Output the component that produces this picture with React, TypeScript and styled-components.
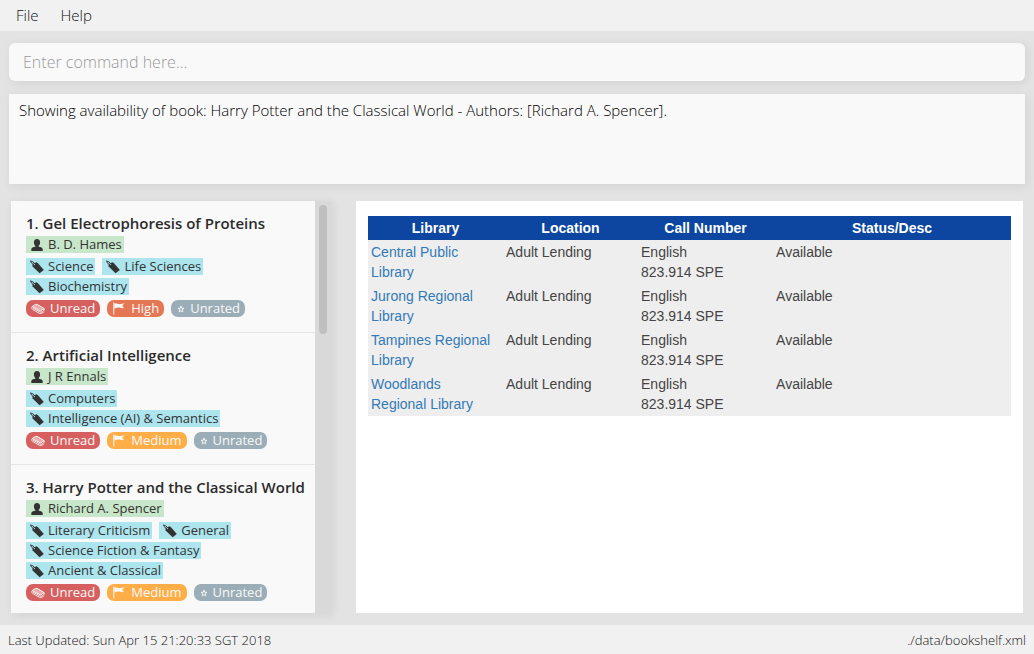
import React from "react";
import styled, { createGlobalStyle } from "styled-components";

const GlobalStyle = createGlobalStyle`
  *, *::before, *::after { box-sizing: border-box; }
  body { margin: 0; background: #e3e3e3; font-family: "Open Sans", sans-serif; color: #333; }
`;

const Window = styled.div`
  display: flex;
  flex-direction: column;
  height: 100vh;
`;

const MenuBar = styled.nav`
  display: flex;
  gap: 6px;
  padding: 4px 8px 5px;
  background: #f1f1f1;
`;

const MenuButton = styled.button`
  border: 0;
  padding: 0 8px;
  background: transparent;
  font: 300 15px/22px "Open Sans", sans-serif;
  color: #111;
`;

const Main = styled.main`
  flex: 1;
  min-height: 0;
  display: flex;
  flex-direction: column;
  padding: 12px 9px;
`;

const CommandBox = styled.input`
  width: 100%;
  height: 38px;
  padding: 0 14px;
  border: 0;
  border-radius: 6px;
  outline: 0;
  background: #f9f9f9;
  box-shadow: 2px 2px 10px rgba(0, 0, 0, 0.08);
  font: 300 16px/24px "Open Sans", sans-serif;
  color: #111;
  &::placeholder { color: #999; opacity: 1; }
`;

const ResultBox = styled.section`
  flex: none;
  min-height: 90px;
  margin-top: 13px;
  padding: 5px 10px;
  background: #f9f9f9;
  box-shadow: 2px 2px 10px rgba(0, 0, 0, 0.08);
  font-weight: 300;
  font-size: 15px;
  line-height: 22px;
  color: #000;
`;

const Panels = styled.div`
  flex: 1;
  min-height: 0;
  display: flex;
  gap: 25px;
  margin-top: 17px;
  padding: 0 2px;
`;

const ListPanel = styled.section`
  flex: 0 0 320px;
  display: flex;
  background: #f9f9f9;
  box-shadow: 2px 2px 10px rgba(0, 0, 0, 0.08);
`;

const BookList = styled.ol`
  flex: 1;
  min-width: 0;
  margin: 0;
  padding: 0;
  overflow: hidden;
  list-style: none;
`;

const ScrollTrack = styled.div`
  width: 16px;
  padding: 4px;
  background: #d9d9d9;
`;

const ScrollThumb = styled.div`
  height: 32%;
  border-radius: 4px;
  background: #bfbfbf;
`;

const Card = styled.li`
  padding: 10px 0 15px 15px;
  border-bottom: 1px solid #e6e6e6;
`;

const Title = styled.h2`
  margin: 0 0 1px;
  font-weight: 600;
  font-size: 15px;
  line-height: 24px;
  white-space: nowrap;
  color: #2b2b2b;
`;

const ChipRow = styled.div`
  display: flex;
  flex-wrap: wrap;
  gap: 3px 7px;
  padding-right: 15px;
  & + & { margin-top: 5px; }
`;

const Chip = styled.span<{ $color: string }>`
  display: flex;
  align-items: center;
  gap: 4px;
  height: 17px;
  padding: 0 2px 0 4px;
  background: ${(p) => p.$color};
  font-size: 13px;
  line-height: 17px;
  white-space: nowrap;
  color: #333;
`;

const Pill = styled(Chip)`
  gap: 5px;
  padding: 0 5px;
  border-radius: 7px;
  color: #f9f9f9;
`;

const Glyph = styled.svg`
  flex: none;
  display: block;
`;

const BrowserPanel = styled.section`
  flex: 1;
  min-width: 0;
  padding: 15px 12px;
  background: #fff;
`;

const Table = styled.table`
  width: 100%;
  table-layout: fixed;
  border-collapse: collapse;
  background: #eee;
  font: 14px/20px "Liberation Sans", Arial, sans-serif;
  color: #444;
`;

const HeadCell = styled.th<{ $width: string }>`
  width: ${(p) => p.$width};
  padding: 2px 3px;
  background: #0c46a1;
  color: #fff;
  text-align: center;
`;

const Cell = styled.td`
  padding: 2px 6px 2px 3px;
  vertical-align: top;
`;

const LibraryLink = styled.a`
  color: #337ab7;
  text-decoration: none;
`;

const StatusBar = styled.footer`
  display: flex;
  justify-content: space-between;
  padding: 5px 8px 4px;
  background: #f1f1f1;
  font-weight: 300;
  font-size: 13px;
  line-height: 20px;
  color: #111;
`;

const PersonIcon = () => (
  <Glyph width="14" height="14" viewBox="0 0 14 14" fill="#333">
    <path d="M7 1C5 1 3.900 2.300 3.900 4.300C3.900 6 4.500 7.200 5.300 8V8.800C3.200 9.200 1.300 9.800 1.300 11.300V13H12.700V11.300C12.700 9.800 10.800 9.200 8.700 8.800V8C9.500 7.200 10.100 6 10.100 4.300C10.100 2.300 9 1 7 1z" />
  </Glyph>
);

const TagIcon = () => (
  <Glyph width="14" height="14" viewBox="0 0 14 14" fill="none">
    <path d="M0.500 0.900L3.200 2L5 4.600M0.500 0.900L1.600 3.200L4 4.800" stroke="#333" strokeWidth="0.900" />
    <path d="M2.400 4.600L6.200 2.300L7.800 3L13.800 10.100L9.600 13.300L2.600 6.600z" fill="#333" />
    <circle cx="4.500" cy="4.600" r="0.600" fill="#ace5ee" />
  </Glyph>
);

const BookIcon = () => (
  <Glyph width="14" height="12" viewBox="0 0 14 12" fill="none" stroke="#f9f9f9" strokeLinejoin="round">
    <path d="M1.200 3.600C2.500 2.200 4 1.500 6 1.300L13.200 5.600L9.500 7.900z" fill="#f9f9f9" fillOpacity="0.500" strokeWidth="0.900" />
    <path d="M1.200 3.600C0.500 4.600 0.600 5.600 1.400 6.300L8.600 10.500C10.500 10.500 12.200 9.800 13.300 8.500M2 5L9.200 9.200C10.900 9.100 12.300 8.300 13.200 7.100V5.600" strokeWidth="0.900" />
  </Glyph>
);

const FlagIcon = () => (
  <Glyph width="14" height="13" viewBox="0 0 14 13" fill="#f9f9f9">
    <path d="M1.300 0.500H2.300V12.500H1.300z" />
    <path d="M2.300 1.400C4.500 0.700 6.200 2.500 8.400 2.100C9.800 1.900 11 1.500 12.400 1C11.600 2.300 10.700 3.200 10.200 4C10.900 4.800 11.500 5.300 12 6.100C9 6.700 8.200 5.300 5.900 5.600C4.300 5.800 3.300 6.200 2.300 7z" />
  </Glyph>
);

const StarIcon = () => (
  <Glyph width="9" height="10" viewBox="0 0 9 10" fill="none" stroke="#f9f9f9" strokeWidth="0.900">
    <path d="M5 2L5.700 4.300H8L6.200 5.700L6.800 8L5 6.700L3.200 8L3.800 5.700L2 4.300H4.300z" />
  </Glyph>
);

type Priority = "High" | "Medium";

const priorityColor: Record<Priority, string> = { High: "#e57755", Medium: "#ffad46" };

const books: { title: string; author: string; tags: string[]; priority: Priority }[] = [
  { title: "Gel Electrophoresis of Proteins", author: "B. D. Hames", tags: ["Science", "Life Sciences", "Biochemistry"], priority: "High" },
  { title: "Artificial Intelligence", author: "J R Ennals", tags: ["Computers", "Intelligence (AI) & Semantics"], priority: "Medium" },
  {
    title: "Harry Potter and the Classical World",
    author: "Richard A. Spencer",
    tags: ["Literary Criticism", "General", "Science Fiction & Fantasy", "Ancient & Classical"],
    priority: "Medium",
  },
];

const libraries = ["Central Public Library", "Jurong Regional Library", "Tampines Regional Library", "Woodlands Regional Library"];

export default function App() {
  return (
    <Window>
      <GlobalStyle />
      <MenuBar>
        <MenuButton>File</MenuButton>
        <MenuButton>Help</MenuButton>
      </MenuBar>
      <Main>
        <CommandBox type="text" aria-label="Command" placeholder="Enter command here..." />
        <ResultBox>
          Showing availability of book: Harry Potter and the Classical World - Authors: [Richard A. Spencer].
        </ResultBox>
        <Panels>
          <ListPanel>
            <BookList>
              {books.map((book, i) => (
                <Card key={book.title}>
                  <Title>{`${i + 1}. ${book.title}`}</Title>
                  <ChipRow>
                    <Chip $color="#c8e6c9"><PersonIcon />{book.author}</Chip>
                  </ChipRow>
                  <ChipRow>
                    {book.tags.map((tag) => (
                      <Chip key={tag} $color="#ace5ee"><TagIcon />{tag}</Chip>
                    ))}
                  </ChipRow>
                  <ChipRow>
                    <Pill $color="#d66060"><BookIcon />Unread</Pill>
                    <Pill $color={priorityColor[book.priority]}><FlagIcon />{book.priority}</Pill>
                    <Pill $color="#9badb7"><StarIcon />Unrated</Pill>
                  </ChipRow>
                </Card>
              ))}
            </BookList>
            <ScrollTrack><ScrollThumb /></ScrollTrack>
          </ListPanel>
          <BrowserPanel>
            <Table>
              <thead>
                <tr>
                  <HeadCell $width="21%">Library</HeadCell>
                  <HeadCell $width="21%">Location</HeadCell>
                  <HeadCell $width="21%">Call Number</HeadCell>
                  <HeadCell $width="37%">Status/Desc</HeadCell>
                </tr>
              </thead>
              <tbody>
                {libraries.map((name) => (
                  <tr key={name}>
                    <Cell><LibraryLink href="#">{name}</LibraryLink></Cell>
                    <Cell>Adult Lending</Cell>
                    <Cell>English<br />823.914 SPE</Cell>
                    <Cell>Available</Cell>
                  </tr>
                ))}
              </tbody>
            </Table>
          </BrowserPanel>
        </Panels>
      </Main>
      <StatusBar>
        <span>Last Updated: Sun Apr 15 21:20:33 SGT 2018</span>
        <span>./data/bookshelf.xml</span>
      </StatusBar>
    </Window>
  );
}
